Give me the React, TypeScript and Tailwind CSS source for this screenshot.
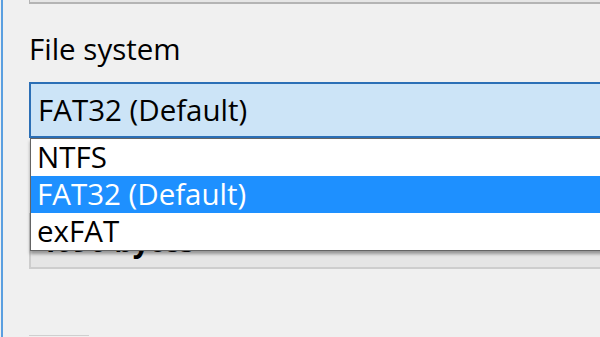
import React from 'react';

const font = { fontFamily: '"Segoe UI", "Open Sans", "Noto Sans", sans-serif' };

const options = ['NTFS', 'FAT32 (Default)', 'exFAT'];

export default function App() {
    const selected = 1;

    return (
        <div className="w-[600px] h-[337px] bg-[#f0f0f0] overflow-hidden flex text-black" style={font}>
            {/* window edge */}
            <div className="ml-[1px] w-[2px] h-full bg-[#5a9fe0] shrink-0"></div>

            <div className="flex-1 pl-[26px] flex flex-col">
                {/* bottom of the field above */}
                <div className="h-[4px] border-l border-b-2 border-[#b4b4b4] bg-[#e6e6e6] -mr-4"></div>

                <div className="mt-[30px] text-[29.5px] leading-[30px]">File system</div>

                <div className="relative mt-[18px]">
                    {/* combo box (open) */}
                    <div className="h-[56px] -mr-4 border-2 border-[#2b6fb6] bg-[#cce4f7] flex items-center pl-[7px] text-[29.5px]">
                        FAT32 (Default)
                    </div>

                    {/* cluster size combo, behind the list */}
                    <div className="mt-[75px] h-[56px] -mr-4 border-2 border-[#cdcdcd] bg-[#e5e5e5] flex items-start pt-[11px] pl-[8px] text-[29.5px] leading-[30px] font-bold">
                        4096 bytes
                    </div>

                    {/* dropdown list */}
                    <div className="absolute left-[1px] top-[56px] -right-4 bg-white border border-[#646464] border-r-0 shadow-[0_3px_3px_rgba(0,0,0,0.35)]">
                        {options.map((opt, i) => (
                            <div
                                key={opt}
                                className={`h-[37px] flex items-center pl-[6px] text-[29.5px] ${
                                    i === selected ? 'bg-[#1e90ff] text-white' : ''
                                }`}
                            >
                                {opt}
                            </div>
                        ))}
                    </div>
                </div>

                <div className="mt-auto mb-[1px] w-[60px] h-px bg-[#cfcfcf]"></div>
            </div>
        </div>
    );
}
